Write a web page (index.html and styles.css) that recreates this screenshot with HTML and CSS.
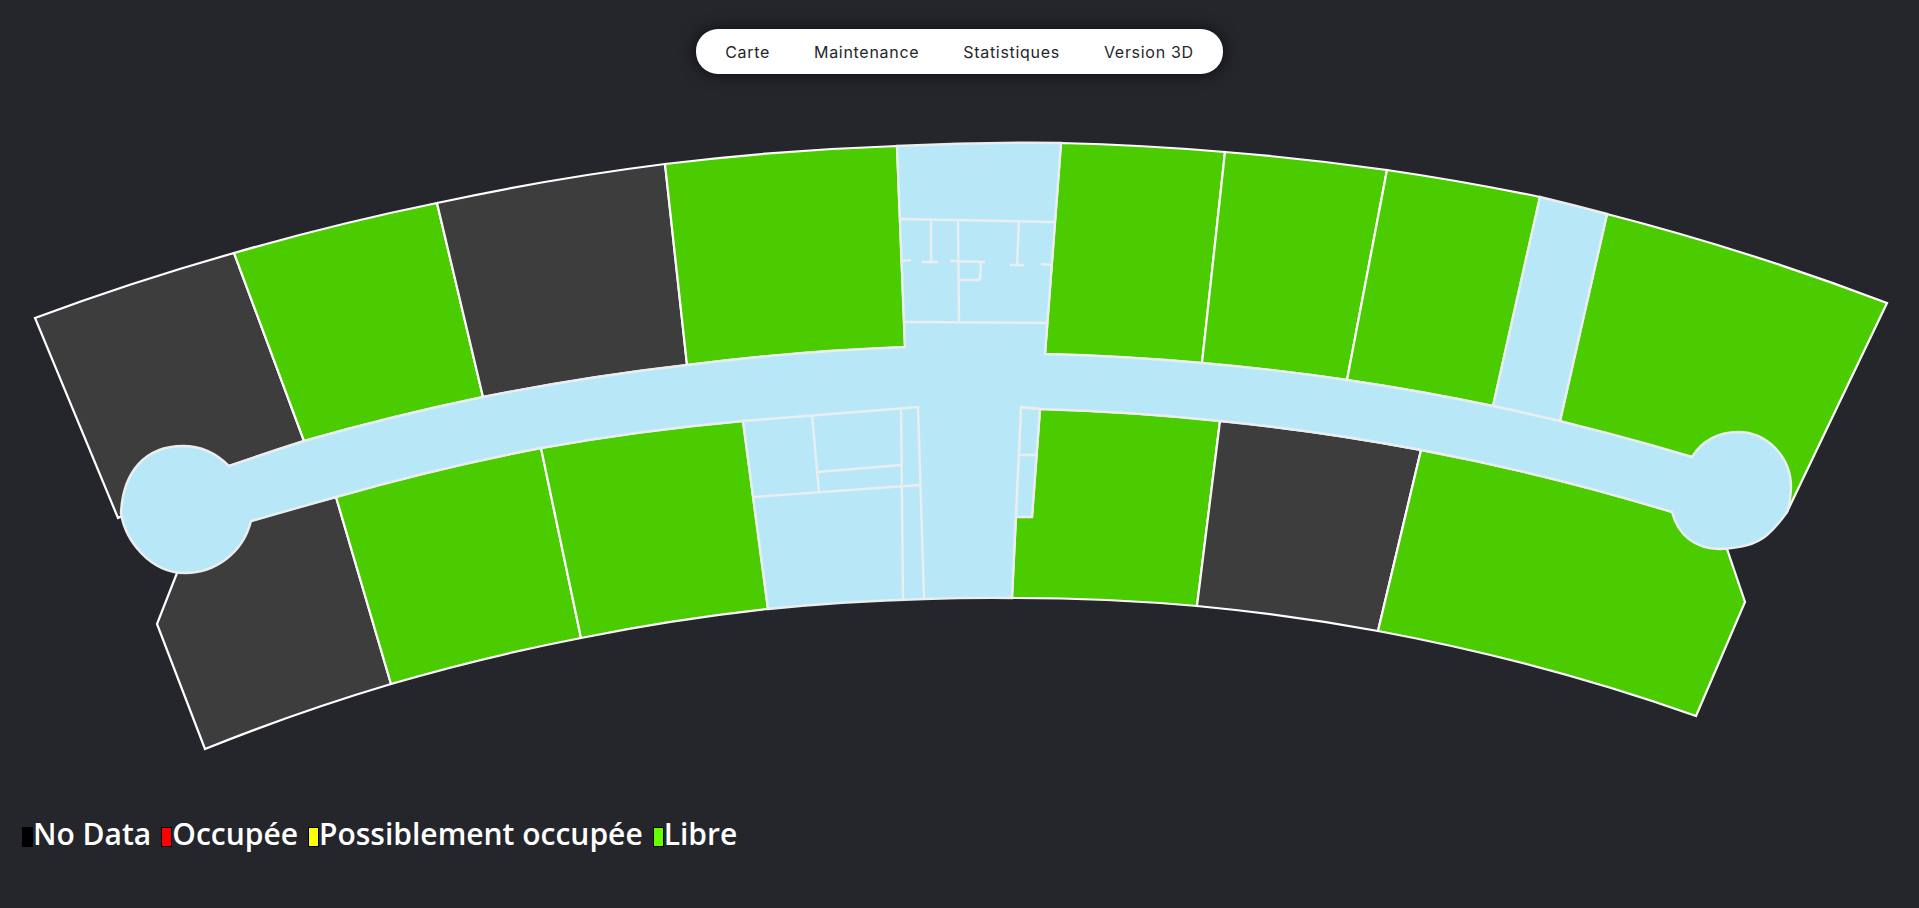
FILE: index.html
```html
<!DOCTYPE html>
<html lang="fr">
<head>
  <meta charset="UTF-8" />
  <meta name="viewport" content="width=device-width, initial-scale=1.0"/>
  <title>Carte des salles</title>
  <link rel="stylesheet" href="styles.css">
</head>
<body>

  <!-- MENU -->
  <nav class="menu">
    <a href="#">Carte</a>
    <a href="#">Maintenance</a>
    <a href="#">Statistiques</a>
    <a href="#">Version 3D</a>
  </nav>

  <!-- PLAN DE L'ETAGE -->
  <svg class="plan" viewBox="0 100 1919 680" aria-label="Plan de l'étage">
    <!-- salles du haut -->
    <path class="room nodata" d="M35 318A2636 2636 0 0 1 234 253L304 441L229 466L118 518Z"/>
    <path class="room libre" d="M234 253A2636 2636 0 0 1 437 203L483 397A2482 2482 0 0 0 304 441Z"/>
    <path class="room nodata" d="M437 203A2636 2636 0 0 1 665 164L687 365A2482 2482 0 0 0 483 397Z"/>
    <path class="room libre" d="M665 164A2636 2636 0 0 1 897 146L905 347A2482 2482 0 0 0 687 365Z"/>
    <path class="room libre" d="M1061 143A2636 2636 0 0 1 1225 152L1202 363A2482 2482 0 0 0 1045 354Z"/>
    <path class="room libre" d="M1225 152A2636 2636 0 0 1 1387 170L1347 380A2482 2482 0 0 0 1202 363Z"/>
    <path class="room libre" d="M1387 170A2636 2636 0 0 1 1540 197L1493 406A2482 2482 0 0 0 1347 380Z"/>
    <path class="room libre" d="M1607 214A2636 2636 0 0 1 1887 303L1787 512L1692 457L1560 421Z"/>

    <!-- salles du bas -->
    <path class="room nodata" d="M177 573L157 624L205 749A2123 2123 0 0 1 391 684L336 497A2348 2348 0 0 0 251 521Z"/>
    <path class="room libre" d="M336 497A2348 2348 0 0 1 541 448L581 638A2123 2123 0 0 0 391 684Z"/>
    <path class="room libre" d="M541 448A2348 2348 0 0 1 743 421L768 609A2123 2123 0 0 0 581 638Z"/>
    <path class="room libre" d="M1040 409A2348 2348 0 0 1 1220 421L1197 606A2123 2123 0 0 0 1012 598L1016 517L1032 517Z"/>
    <path class="room nodata" d="M1220 421A2348 2348 0 0 1 1421 450L1378 631A2123 2123 0 0 0 1197 606Z"/>
    <path class="room libre" d="M1421 450A2348 2348 0 0 1 1672 512L1727 549L1745 602L1696 716A2123 2123 0 0 0 1378 631Z"/>

    <!-- couloirs -->
    <path class="hall" d="M1540 197A2636 2636 0 0 1 1607 214L1560 421L1493 406Z"/>
    <path class="hall" d="M1021 407L1040 409L1032 517L1016 517Z"/>
    <path class="hall" d="M229 466A2482 2482 0 0 1 304 441A2482 2482 0 0 1 483 397A2482 2482 0 0 1 687 365A2482 2482 0 0 1 905 347L897 146A2636 2636 0 0 1 1061 143L1045 354A2482 2482 0 0 1 1202 363A2482 2482 0 0 1 1347 380A2482 2482 0 0 1 1493 406A2482 2482 0 0 1 1692 457C1702 440 1720 432 1738 432C1768 432 1791 458 1791 487C1791 497 1788 510 1787 512C1780 522 1774 529 1767 535C1755 545 1740 548 1720 549C1695 549 1678 535 1672 512A2348 2348 0 0 0 1421 450A2348 2348 0 0 0 1220 421A2348 2348 0 0 0 1040 409L1021 407L1012 598A2123 2123 0 0 0 924 599A2123 2123 0 0 0 768 609L743 421A2348 2348 0 0 0 541 448A2348 2348 0 0 0 336 497L251 521C243 553 215 573 185 573C150 573 125 540 121 513C123 472 145 446 183 446C200 446 215 452 229 466Z"/>

    <!-- cloisons -->
    <path class="wall" d="M901 219L1056 222M905 322L1047 323M931 221V262M922 262H938M958 221L959 322M1019 222L1017 265M1010 265L1024 265M903 261L911 260M950 261L985 262M981 262L980 280M959 280L980 280M1041 264L1052 265"/>
    <path class="wall" d="M743 421L918 407L924 598M901 408L903 599M754 497L919 485M812 415L819 492M817 472L901 465M1021 407L1040 409M1019 455H1036"/>
  </svg>

  <!-- LEGENDE -->
  <div class="legende">
    <span class="item"><i class="carre c-nodata"></i>No Data</span>
    <span class="item"><i class="carre c-occupee"></i>Occupée</span>
    <span class="item"><i class="carre c-possible"></i>Possiblement occupée</span>
    <span class="item"><i class="carre c-libre"></i>Libre</span>
  </div>

</body>
</html>
```

FILE: styles.css
```css
html, body {
  height: 100%;
}
body {
  margin: 0;
  background: #25262b;
  display: flex;
  flex-direction: column;
  align-items: center;
  overflow: hidden;
}
.menu {
  display: flex;
  margin-top: 29px;
  margin-bottom: 26px;
  height: 45px;
  padding: 0 7.5px;
  background: #ffffff;
  border-radius: 22px;
  box-shadow: 0 0 16px rgba(0,0,0,0.7);
}
.menu a {
  display: flex;
  align-items: center;
  padding: 0 22px;
  font-family: Inter, "Open Sans", sans-serif;
  font-size: 16px;
  letter-spacing: 0.7px;
  color: #25262b;
  text-decoration: none;
}
.plan {
  display: block;
  width: 1919px;
  height: 680px;
  flex: none;
}
.room {
  stroke: #ffffff;
  stroke-width: 2.2;
  stroke-linejoin: miter;
}
.nodata {
  fill: #3d3d3d;
}
.libre {
  fill: #4bcc00;
}
.hall {
  fill: #b8e8f8;
  stroke: #e9eef0;
  stroke-width: 2.4;
}
.wall {
  fill: none;
  stroke: #e9eef0;
  stroke-width: 2.4;
}
.legende {
  align-self: flex-start;
  display: flex;
  gap: 10px;
  margin-top: 34px;
  padding-left: 22px;
  font-family: "Open Sans", "Noto Sans", sans-serif;
  font-size: 30px;
  font-weight: 600;
  line-height: 40px;
  color: #ffffff;
}
.item {
  display: flex;
  align-items: center;
}
.carre {
  display: block;
  box-sizing: border-box;
  width: 11px;
  height: 20px;
  margin-top: 6px;
  border: 1px solid #000;
}
.c-nodata {
  background: #000000;
}
.c-occupee {
  background: #ff0000;
}
.c-possible {
  background: #ffff00;
}
.c-libre {
  background: #66ff00;
}
```
